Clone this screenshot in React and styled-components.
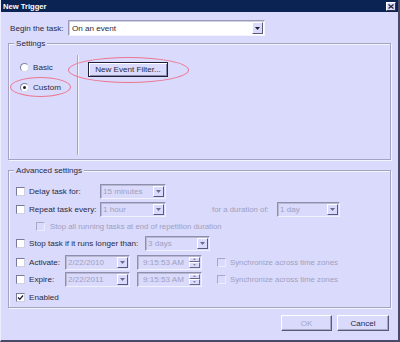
import React from 'react';
import styled, { createGlobalStyle } from 'styled-components';

const Global = createGlobalStyle`
  html, body { margin: 0; padding: 0; background: #dadafc; }
  body { font-family: "Liberation Sans", Arial, sans-serif; font-size: 8.1px; color: #2a2a3e; }
  * { box-sizing: border-box; }
`;

const Window = styled.div`
  position: relative;
  width: 400px;
  height: 342px;
  background: #dadafc;
  border-left: 1px solid #ececff;
  border-right: 2px solid #4a4a68;
  border-bottom: 2px solid #4a4a68;
  display: flex;
  flex-direction: column;
`;

const TitleBar = styled.div`
  height: 12px;
  background: #0b2352;
  display: flex;
  align-items: center;
  justify-content: space-between;
  padding: 0 2px 0 2px;
`;

const Title = styled.span`
  color: #fff;
  font-weight: bold;
  font-size: 7.6px;
`;

const CloseBtn = styled.div`
  width: 10px;
  height: 9px;
  margin-top: 1px;
  background: #dadafc;
  border: 1px solid;
  border-color: #fff #30304a #30304a #fff;
  display: flex;
  align-items: center;
  justify-content: center;
`;

const Body = styled.div`
  flex: 1;
  padding: 8px 7px 0 7px;
  display: flex;
  flex-direction: column;
`;

const Row = styled.div`
  display: flex;
  align-items: center;
  height: 16px;
  margin-top: ${p => p.$mt || 0}px;
  padding-left: ${p => p.$pl || 0}px;
`;

const Label = styled.span`
  width: ${p => (p.$w ? `${p.$w}px` : 'auto')};
  flex: none;
  padding-left: ${p => p.$pl || 0}px;
  margin-left: ${p => p.$ml || 0}px;
  color: ${p => (p.$dis ? '#a0a0c0' : '#2a2a3e')};
  font-size: ${p => (p.$dis ? '7.8px' : 'inherit')};
  white-space: nowrap;
`;

const Combo = styled.div`
  width: ${p => p.$w}px;
  height: ${p => p.$h || 15}px;
  margin-left: ${p => p.$ml || 0}px;
  flex: none;
  display: flex;
  align-items: center;
  justify-content: space-between;
  background: ${p => (p.$on ? '#fff' : '#dadafc')};
  border: 1px solid;
  border-color: ${p => (p.$on ? '#9a9ab8 #f4f4ff #f4f4ff #9a9ab8' : '#8e8eae #f2f2ff #f2f2ff #8e8eae')};
  box-shadow: ${p => (p.$on ? 'inset 1px 1px 0 #d0d0e4' : 'inset 1px 1px 0 #b8b8d0')};
  padding-left: 2px;
  color: ${p => (p.$on ? '#2a2a3e' : '#a0a0c0')};
  white-space: nowrap;
  overflow: hidden;
`;

const DropBtn = styled.div`
  width: 11px;
  height: calc(100% - 2px);
  margin-right: 1px;
  flex: none;
  background: #dadafc;
  border: 1px solid;
  border-color: #fff #5a5a78 #5a5a78 #fff;
  display: flex;
  align-items: center;
  justify-content: center;
`;

const Spinner = styled.div`
  width: 11px;
  height: calc(100% - 2px);
  margin-right: 1px;
  flex: none;
  display: flex;
  flex-direction: column;
`;

const SpinHalf = styled.div`
  flex: 1;
  background: #dadafc;
  border: 1px solid;
  border-color: #fff #6a6a88 #6a6a88 #fff;
  display: flex;
  align-items: center;
  justify-content: center;
`;

const Group = styled.div`
  position: relative;
  height: ${p => p.$h}px;
  margin-top: ${p => p.$mt}px;
  border: 1px solid #a4a4c2;
  box-shadow: inset 1px 1px 0 #f4f4ff, 1px 1px 0 #f4f4ff;
  display: flex;
  flex-direction: ${p => p.$dir || 'column'};
`;

const Legend = styled.span`
  position: absolute;
  left: 5px;
  top: -6px;
  padding: 0 2px;
  background: #dadafc;
  line-height: 11px;
`;

const RadioCol = styled.div`
  width: 68px;
  flex: none;
  padding: 17px 0 0 11px;
  display: flex;
  flex-direction: column;
  gap: 8px;
`;

const RadioRow = styled.div`
  display: flex;
  align-items: center;
  height: 12px;
  gap: 4px;
`;

const Radio = styled.div`
  width: 9px;
  height: 9px;
  border-radius: 50%;
  background: #fff;
  border: 1px solid;
  border-color: #8080a0 #d8d8ec #d8d8ec #8080a0;
  display: flex;
  align-items: center;
  justify-content: center;
  &::after {
    content: '';
    display: ${p => (p.$on ? 'block' : 'none')};
    width: 3px;
    height: 3px;
    border-radius: 50%;
    background: #1e1e30;
  }
`;

const VSep = styled.div`
  width: 2px;
  margin: 11px 0 4px 0;
  border-left: 1px solid #a4a4c2;
  border-right: 1px solid #f4f4ff;
`;

const ButtonPane = styled.div`
  padding: 18px 0 0 9px;
`;

const Button = styled.div`
  width: ${p => p.$w}px;
  height: ${p => p.$h || 16}px;
  display: flex;
  align-items: center;
  justify-content: center;
  background: #dadafc;
  color: ${p => (p.$dis ? '#a4a4c0' : '#2a2a3e')};
  border: 1px solid;
  border-color: ${p => (p.$def ? '#1e1e36' : '#fff #5a5a78 #5a5a78 #fff')};
  box-shadow: ${p => (p.$def ? 'inset 1px 1px 0 #fff, inset -1px -1px 0 #8a8aa8' : 'inset -1px -1px 0 #a8a8c4')};
  white-space: nowrap;
`;

const Check = styled.div`
  width: 9px;
  height: 9px;
  flex: none;
  background: ${p => (p.$dis ? '#dadafc' : '#fff')};
  border: 1px solid;
  border-color: ${p => (p.$dis ? '#a8a8c4 #ececff #ececff #a8a8c4' : '#7a7a9a #d0d0e4 #d0d0e4 #7a7a9a')};
  margin-right: ${p => p.$gap || 4}px;
  margin-left: ${p => p.$ml || 0}px;
  display: flex;
  align-items: center;
  justify-content: center;
`;

const Footer = styled.div`
  display: flex;
  justify-content: flex-end;
  gap: 5px;
  margin-top: 7px;
  padding-right: 2px;
`;

const Ellipse = styled.div`
  position: absolute;
  left: ${p => p.$x}px;
  top: ${p => p.$y}px;
  width: ${p => p.$w}px;
  height: ${p => p.$h}px;
  border: 1px solid #ec7690;
  border-radius: 50%;
  pointer-events: none;
`;

const Arrow = ({ dis }) => (
  <svg width="5" height="3" viewBox="0 0 5 3">
    <path d="M0 0 H5 L2.5 3 Z" fill={dis ? '#6c6c88' : '#1e1e30'} />
  </svg>
);

const SmallArrow = ({ up }) => (
  <svg width="3" height="2" viewBox="0 0 3 2">
    <path d={up ? 'M0 2 H3 L1.5 0 Z' : 'M0 0 H3 L1.5 2 Z'} fill="#8a8aa6" />
  </svg>
);

const DisCombo = ({ w, ml, children }) => (
  <Combo $w={w} $ml={ml}>
    <span>{children}</span>
    <DropBtn><Arrow dis /></DropBtn>
  </Combo>
);

const TimeBox = ({ ml, children }) => (
  <Combo $w={65} $ml={ml}>
    <span style={{ paddingLeft: 3 }}>{children}</span>
    <Spinner>
      <SpinHalf><SmallArrow up /></SpinHalf>
      <SpinHalf><SmallArrow /></SpinHalf>
    </Spinner>
  </Combo>
);

export default function App() {
  return (
    <>
      <Global />
      <Window>
        <TitleBar>
          <Title>New Trigger</Title>
          <CloseBtn>
            <svg width="6" height="5" viewBox="0 0 6 5">
              <path d="M0.5 0.5 L5.5 4.5 M5.5 0.5 L0.5 4.5" stroke="#1e1e30" strokeWidth="1.2" />
            </svg>
          </CloseBtn>
        </TitleBar>
        <Body>
          <Row>
            <Label $w={60} $pl={2}>Begin the task:</Label>
            <Combo $w={197} $h={16} $on>
              <span style={{ paddingLeft: 1 }}>On an event</span>
              <DropBtn><Arrow /></DropBtn>
            </Combo>
          </Row>

          <Group $h={117} $mt={7} $dir="row">
            <Legend>Settings</Legend>
            <RadioCol>
              <RadioRow><Radio /><span>Basic</span></RadioRow>
              <RadioRow><Radio $on /><span>Custom</span></RadioRow>
            </RadioCol>
            <VSep />
            <ButtonPane>
              <Button $w={80} $h={15} $def>New Event Filter...</Button>
            </ButtonPane>
          </Group>

          <Group $h={138} $mt={10}>
            <Legend>Advanced settings</Legend>
            <Row $mt={12} $pl={7}>
              <Check />
              <Label $w={71}>Delay task for:</Label>
              <DisCombo w={66}>15 minutes</DisCombo>
            </Row>
            <Row $mt={2} $pl={7}>
              <Check />
              <Label $w={71}>Repeat task every:</Label>
              <DisCombo w={66}>1 hour</DisCombo>
              <Label $w={65} $ml={46} $dis>for a duration of:</Label>
              <DisCombo w={63}>1 day</DisCombo>
            </Row>
            <Row $mt={1} $pl={27}>
              <Check $dis $gap={5} />
              <Label $dis>Stop all running tasks at end of repetition duration</Label>
            </Row>
            <Row $mt={1} $pl={7}>
              <Check />
              <Label $w={116}>Stop task if it runs longer than:</Label>
              <DisCombo w={65}>3 days</DisCombo>
            </Row>
            <Row $mt={3} $pl={7}>
              <Check />
              <Label $w={36}>Activate:</Label>
              <DisCombo w={65}>2/22/2010</DisCombo>
              <TimeBox ml={7}>9:15:53 AM</TimeBox>
              <Check $dis $ml={15} />
              <Label $dis>Synchronize across time zones</Label>
            </Row>
            <Row $mt={1} $pl={7}>
              <Check />
              <Label $w={36}>Expire:</Label>
              <DisCombo w={65}>2/22/2011</DisCombo>
              <TimeBox ml={7}>9:15:53 AM</TimeBox>
              <Check $dis $ml={15} />
              <Label $dis>Synchronize across time zones</Label>
            </Row>
            <Row $mt={2} $pl={7}>
              <Check>
                <svg width="7" height="7" viewBox="0 0 7 7">
                  <path d="M1 3.5 L2.8 5.3 L6 1.5" stroke="#1e1e30" strokeWidth="1.3" fill="none" />
                </svg>
              </Check>
              <Label>Enabled</Label>
            </Row>
          </Group>

          <Footer>
            <Button $w={51} $dis>OK</Button>
            <Button $w={52}>Cancel</Button>
          </Footer>
        </Body>
        <Ellipse $x={67} $y={57} $w={121} $h={26} />
        <Ellipse $x={9} $y={77} $w={61} $h={20} />
      </Window>
    </>
  );
}
